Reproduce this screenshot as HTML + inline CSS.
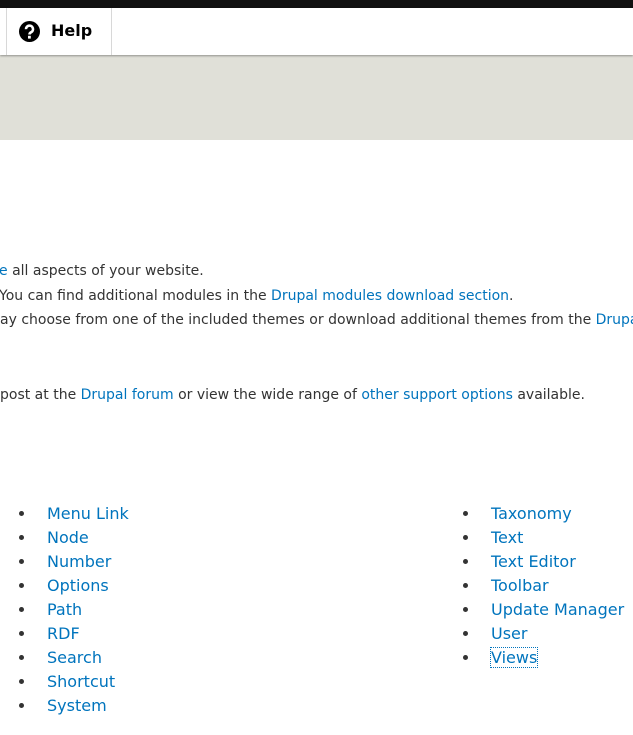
<!DOCTYPE html>
<html><head><style>
body{margin:0;width:633px;height:735px;overflow:hidden;background:#fff;font-family:"DejaVu Sans",sans-serif;color:#333;position:relative}
a{color:#0074bd;text-decoration:none}
.top{position:absolute;left:0;top:0;width:633px;height:8px;background:#111}
.bar{position:absolute;left:0;top:8px;width:633px;height:47px;background:#fff;box-shadow:0 1px 2px rgba(0,0,0,.35);z-index:2}
.tab{position:absolute;left:6px;top:0;width:104px;height:47px;border-left:1px solid #d8d8d8;border-right:1px solid #d8d8d8}
.tab span{position:absolute;left:44px;top:13px;font-weight:bold;font-size:16px;color:#000}
.grey{position:absolute;left:0;top:55px;width:633px;height:85px;background:#e0e0d8}
.p{position:absolute;left:0;font-size:14px;white-space:nowrap;line-height:18px}
ul{position:absolute;margin:0;padding:0 0 0 18px;list-style:disc;font-size:16px;line-height:24px}
li{padding-left:11px}
</style></head><body>
<div class="top"></div>
<div class="bar"><div class="tab">
<svg style="position:absolute;left:12px;top:13px" width="21" height="21" viewBox="0 0 21 21"><circle cx="10.5" cy="10.5" r="10.5" fill="#000"/><path d="M7 8.2a3.5 3.5 0 1 1 5 3.1c-1 .5-1.5 1-1.5 2.2" stroke="#fff" stroke-width="2.6" fill="none"/><rect x="9" y="14.8" width="2.8" height="2.8" fill="#fff"/></svg>
<span>Help</span></div></div>
<div class="grey"></div>
<div class="p" style="top:262px;left:-1px"><a>e</a> all aspects of your website.</div>
<div class="p" style="top:287px"><span style="margin-left:-1px">You can find additional modules in the <a>Drupal modules download section</a>.</span></div>
<div class="p" style="top:311px">ay choose from one of the included themes or download additional themes from the <a>Drupal</a></div>
<div class="p" style="top:386px">post at the <a>Drupal forum</a> or view the wide range of <a>other support options</a> available.</div>
<ul style="left:18px;top:502px"><li><a>Menu Link</a></li><li><a>Node</a></li><li><a>Number</a></li><li><a>Options</a></li><li><a>Path</a></li><li><a>RDF</a></li><li><a>Search</a></li><li><a>Shortcut</a></li><li><a>System</a></li></ul>
<ul style="left:462px;top:502px"><li><a>Taxonomy</a></li><li><a>Text</a></li><li><a>Text Editor</a></li><li><a>Toolbar</a></li><li><a>Update Manager</a></li><li><a>User</a></li><li><a style="outline:1px dotted #0074bd">Views</a></li></ul>
</body></html>
